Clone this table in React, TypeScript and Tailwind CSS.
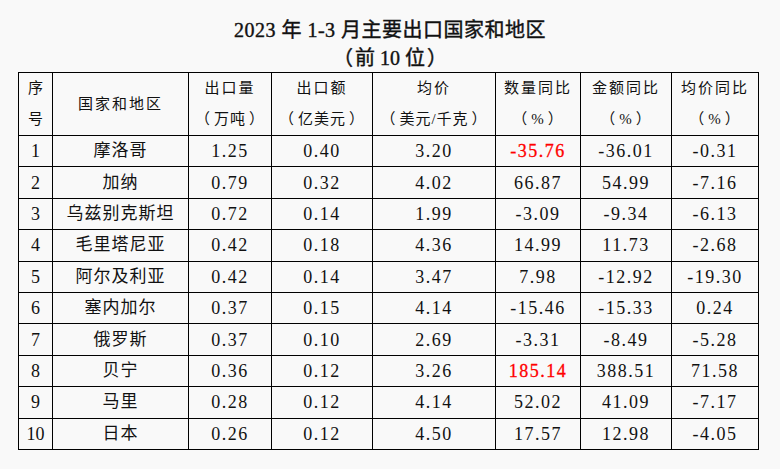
import React from "react";

const rows: { n: string; name: string; v: string[]; red?: number }[] = [
  { n: "1", name: "摩洛哥", v: ["1.25", "0.40", "3.20", "-35.76", "-36.01", "-0.31"], red: 3 },
  { n: "2", name: "加纳", v: ["0.79", "0.32", "4.02", "66.87", "54.99", "-7.16"] },
  { n: "3", name: "乌兹别克斯坦", v: ["0.72", "0.14", "1.99", "-3.09", "-9.34", "-6.13"] },
  { n: "4", name: "毛里塔尼亚", v: ["0.42", "0.18", "4.36", "14.99", "11.73", "-2.68"] },
  { n: "5", name: "阿尔及利亚", v: ["0.42", "0.14", "3.47", "7.98", "-12.92", "-19.30"] },
  { n: "6", name: "塞内加尔", v: ["0.37", "0.15", "4.14", "-15.46", "-15.33", "0.24"] },
  { n: "7", name: "俄罗斯", v: ["0.37", "0.10", "2.69", "-3.31", "-8.49", "-5.28"] },
  { n: "8", name: "贝宁", v: ["0.36", "0.12", "3.26", "185.14", "388.51", "71.58"], red: 3 },
  { n: "9", name: "马里", v: ["0.28", "0.12", "4.14", "52.02", "41.09", "-7.17"] },
  { n: "10", name: "日本", v: ["0.26", "0.12", "4.50", "17.57", "12.98", "-4.05"] },
];

const headers: [string, string][] = [
  ["出口量", "万吨"],
  ["出口额", "亿美元"],
  ["均价", "美元/千克"],
  ["数量同比", "%"],
  ["金额同比", "%"],
  ["均价同比", "%"],
];

const widths = [34, 136, 83, 101, 123, 85, 91, 87];

export default function App() {
  const font = { fontFamily: '"Liberation Serif", "Noto Sans CJK SC", serif' };
  return (
    <div className="w-[780px] h-[469px] bg-[#f9f9f9] text-[#111]" style={font}>
      <div className="pt-[16px] text-center text-[20px] leading-[28px] font-normal text-[#111] [-webkit-text-stroke:0.4px_#111]">
        <div className="tracking-[0.5px]">2023 年 1-3 月主要出口国家和地区</div>
        <div>
          <span className="mr-[2px]">（</span>前 10 位<span className="ml-[2px]">）</span>
        </div>
      </div>
      <table className="ml-[18px] w-[740px] table-fixed border-collapse border border-black">
        <colgroup>
          {widths.map((w, i) => (
            <col key={i} style={{ width: w }} />
          ))}
        </colgroup>
        <thead>
          <tr className="h-[62px]">
            <th className="border border-black p-0 font-normal text-[15px] leading-[31px]">
              <div>序</div>
              <div>号</div>
            </th>
            <th className="border border-black p-0 font-normal text-[15px] tracking-[2px]">
              国家和地区
            </th>
            {headers.map(([a, b], i) => (
              <th key={i} className="border border-black p-0 font-normal text-[15px] leading-[31px]">
                <div className="tracking-[2px]">{a}</div>
                <div className="whitespace-nowrap tracking-[1px]">
                  <span className="mr-[3px]">（</span>
                  {b}
                  <span className="ml-[3px]">）</span>
                </div>
              </th>
            ))}
          </tr>
        </thead>
        <tbody>
          {rows.map((r) => (
            <tr key={r.n} className="h-[31.4px]">
              <td className="border border-black p-0 text-center text-[18px] leading-[30px]">{r.n}</td>
              <td className="border border-black p-0 text-center text-[17px] tracking-[1px] leading-[30px]">
                {r.name}
              </td>
              {r.v.map((v, i) => (
                <td
                  key={i}
                  className={
                    "border border-black p-0 text-center text-[18px] tracking-[1.5px] leading-[30px] " +
                    (r.red === i ? "text-[#ff0000] [-webkit-text-stroke:0.3px_#ff0000]" : "")
                  }
                >
                  {v}
                </td>
              ))}
            </tr>
          ))}
        </tbody>
      </table>
    </div>
  );
}
